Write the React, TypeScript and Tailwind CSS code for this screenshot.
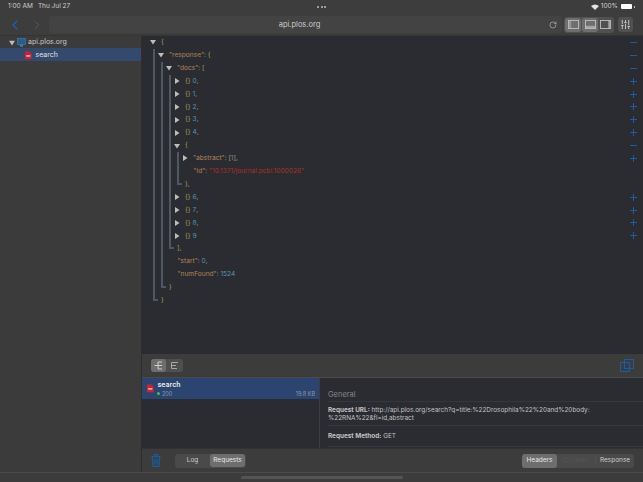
import type { ReactNode } from 'react';
import { ChevronLeft, ChevronRight, RotateCw, SlidersVertical } from 'lucide-react';

function Tri({ open }: { open?: boolean }) {
  return (
    <svg viewBox="0 0 6 6" className="w-[6px] h-[6px] -ml-[3px] mr-[5px] shrink-0">
      {open ? <polygon points="0,1 6,1 3,5.5" fill="#bdbdbd" /> : <polygon points="1,0 5.5,3 1,6" fill="#bdbdbd" />}
    </svg>
  );
}

function Mark({ kind }: { kind?: '+' | '-' }) {
  if (!kind) return null;
  return (
    <svg viewBox="0 0 7 7" shapeRendering="crispEdges" className="w-[7px] h-[7px] ml-auto mr-[6px] shrink-0">
      <rect x="0" y="3" width="7" height="1" fill="#24599c" />
      {kind === '+' && <rect x="3" y="0" width="1" height="7" fill="#24599c" />}
    </svg>
  );
}

function Row({ children, mark, className = '' }: { children: ReactNode; mark?: '+' | '-'; className?: string }) {
  return (
    <div className={`h-[12.9px] flex items-center text-[6.6px] leading-none whitespace-pre ${className}`}>
      {children}
      <Mark kind={mark} />
    </div>
  );
}

const Key = ({ children }: { children: ReactNode }) => <span className="text-[#b08459]">{children}</span>;
const Punct = ({ children }: { children: ReactNode }) => <span className="text-[#a09c58]">{children}</span>;
const Num = ({ children }: { children: ReactNode }) => <span className="text-[#5595b8]">{children}</span>;
const Plain = ({ children }: { children: ReactNode }) => <span className="text-[#9c9c9c]">{children}</span>;

function Block({ open, close, children }: { open: ReactNode; close: ReactNode; children: ReactNode }) {
  return (
    <div>
      <Row mark="-">
        <Tri open />
        {open}
      </Row>
      <div className="flex">
        <div className="w-[5px] mr-[3px] mb-[6px] border-l-2 border-b-2 border-[#4f5664] shrink-0" />
        <div className="flex-1 min-w-0">
          {children}
          <Row>{close}</Row>
        </div>
      </div>
    </div>
  );
}

function Doc({ n, last }: { n: number; last?: boolean }) {
  return (
    <Row mark="+">
      <Tri />
      <Punct>{'{} '}</Punct>
      <Num>{n}</Num>
      {!last && <Plain>,</Plain>}
    </Row>
  );
}

function JsonTree() {
  return (
    <div className="pl-[11px] h-[318px] bg-[#2b2c31] shrink-0">
      <Block open={<Punct>{'{'}</Punct>} close={<Punct>{'}'}</Punct>}>
        <Block
          open={<><Key>"response"</Key><Plain>: </Plain><Punct>{'{'}</Punct></>}
          close={<Punct>{'}'}</Punct>}
        >
          <Block
            open={<><Key>"docs"</Key><Plain>: </Plain><Punct>[</Punct></>}
            close={<><Punct>]</Punct><Plain>,</Plain></>}
          >
            <Doc n={0} />
            <Doc n={1} />
            <Doc n={2} />
            <Doc n={3} />
            <Doc n={4} />
            <Block open={<Punct>{'{'}</Punct>} close={<><Punct>{'}'}</Punct><Plain>,</Plain></>}>
              <Row mark="+">
                <Tri />
                <Key>"abstract"</Key>
                <Plain>: </Plain>
                <Punct>[</Punct>
                <Num>1</Num>
                <Punct>]</Punct>
                <Plain>,</Plain>
              </Row>
              <Row className="pl-[8.5px]">
                <Key>"id"</Key>
                <Plain>: </Plain>
                <span className="text-[#aa302c]">"10.1371/journal.pcbi.1000026"</span>
              </Row>
            </Block>
            <Doc n={6} />
            <Doc n={7} />
            <Doc n={8} />
            <Doc n={9} last />
          </Block>
          <Row className="pl-[8.5px]">
            <Key>"start"</Key>
            <Plain>: </Plain>
            <Num>0</Num>
            <Plain>,</Plain>
          </Row>
          <Row className="pl-[8.5px]">
            <Key>"numFound"</Key>
            <Plain>: </Plain>
            <Num>1524</Num>
          </Row>
        </Block>
      </Block>
    </div>
  );
}

function FileIcon() {
  return (
    <svg width="6.5" height="8.5" viewBox="0 0 8 10" className="shrink-0">
      <path d="M0 0.5 H5.2 L8 3 V10 H0 Z" fill="#d3202c" />
      <rect x="1.4" y="5" width="5.2" height="1.6" fill="#f3d0d0" />
    </svg>
  );
}

function PanelIcon({ side }: { side: 'left' | 'bottom' | 'right' }) {
  return (
    <svg width="11" height="9" viewBox="0 0 12 10">
      <rect x="0.5" y="0.5" width="11" height="9" fill="none" stroke="#bdbdbd" strokeWidth="1" />
      {side === 'left' && <rect x="0.5" y="0.5" width="3" height="9" fill="#bdbdbd" opacity="0.5" />}
      {side === 'bottom' && <rect x="0.5" y="6.5" width="11" height="3" fill="#bdbdbd" opacity="0.7" />}
      {side === 'right' && <rect x="9" y="0.5" width="2.5" height="9" fill="#bdbdbd" opacity="0.7" />}
    </svg>
  );
}

function TopBar() {
  return (
    <div className="h-[36px] bg-[#3d3d3d] border-b border-[#343434] shrink-0 relative">
      <div className="h-[13px] flex items-center px-[8px] text-[6.5px] text-[#cfcfcf]">
        <span>1:00 AM</span>
        <span className="ml-[5px]">Thu Jul 27</span>
        <div className="absolute left-[317px] flex gap-[1.5px]">
          <span className="w-[2px] h-[2px] rounded-full bg-[#bdbdbd]" />
          <span className="w-[2px] h-[2px] rounded-full bg-[#bdbdbd]" />
          <span className="w-[2px] h-[2px] rounded-full bg-[#bdbdbd]" />
        </div>
        <div className="ml-auto flex items-center gap-[2px]">
          <svg width="8" height="6" viewBox="0 0 8 6">
            <path d="M0 2 Q4 -1.2 8 2 L4 6 Z" fill="#e4e4e4" />
          </svg>
          <span>100%</span>
          <span className="w-[11px] h-[5px] bg-white rounded-[1px] ml-[1px]" />
          <span className="w-[1px] h-[2px] bg-[#bbb]" />
        </div>
      </div>
      <div className="h-[23px] flex items-center pl-[7px] pr-[8px]">
        <ChevronLeft className="w-[16px] h-[16px] text-[#1c64b2] shrink-0" strokeWidth={1.6} />
        <ChevronRight className="w-[14px] h-[14px] text-[#5a5a5a] ml-[7px] shrink-0" strokeWidth={1.6} />
        <div className="ml-[5px] w-[513px] h-[17px] pr-[12px] rounded-[3px] bg-[#434343] relative flex items-center justify-center shrink-0">
          <span className="text-[7.5px] text-[#cccccc]">api.plos.org</span>
          <RotateCw className="absolute right-[5px] w-[8px] h-[8px] text-[#b5b5b5]" strokeWidth={2} />
        </div>
        <div className="ml-[2px] w-[50px] h-[16px] rounded-[3px] bg-[#505050] flex items-center px-[1px] shrink-0">
          <div className="w-[16px] h-[14px] rounded-[3px] bg-[#6e6e6e] flex items-center justify-center">
            <PanelIcon side="left" />
          </div>
          <div className="ml-[1px] w-[16px] h-[14px] rounded-[3px] bg-[#6e6e6e] flex items-center justify-center">
            <PanelIcon side="bottom" />
          </div>
          <div className="w-[15px] h-[14px] flex items-center justify-center">
            <PanelIcon side="right" />
          </div>
        </div>
        <div className="ml-[4px] w-[15px] h-[15px] rounded-[3px] bg-[#505050] flex items-center justify-center shrink-0">
          <SlidersVertical className="w-[11px] h-[11px] text-[#c8c8c8]" strokeWidth={2} />
        </div>
      </div>
    </div>
  );
}

function Sidebar() {
  return (
    <div className="w-[142px] bg-[#3b3b3b] border-r border-[#2e2e2e] shrink-0 text-[7px] text-[#c8c8c8]">
      <div className="h-[12px] flex items-center pl-[9px] pt-[1px]">
        <svg viewBox="0 0 7 7" className="w-[6px] h-[6px] shrink-0">
          <polygon points="0,1 7,1 3.5,6.5" fill="#bdbdbd" />
        </svg>
        <svg width="9" height="9" viewBox="0 0 9 9" className="ml-[2px] shrink-0">
          <rect x="0.5" y="0.5" width="8" height="6" fill="#2c5c86" stroke="#3f86bd" strokeWidth="0.6" />
          <rect x="3" y="7" width="3" height="1.6" fill="#3f86bd" />
        </svg>
        <span className="ml-[2px]">api.plos.org</span>
      </div>
      <div className="h-[13px] bg-[#34496e] flex items-center pl-[25px] pt-[1px]">
        <FileIcon />
        <span className="ml-[4px] text-[#e0e0e0]">search</span>
      </div>
    </div>
  );
}

function LowerToolbar() {
  return (
    <div className="h-[24px] bg-[#3c3c3c] border-b border-[#4a4a4a] flex items-center pl-[9px] pr-[9px] shrink-0">
      <div className="h-[13px] w-[32px] rounded-[3px] bg-[#4f4f4f] flex shrink-0">
        <div className="w-[15px] h-[13px] rounded-[3px] bg-[#6e6e6e] flex items-center justify-center">
          <svg width="9" height="9" viewBox="0 0 9 9" fill="none" stroke="#cfcfcf" strokeWidth="1">
            <path d="M0.5 4.5 H4 M4 1 V8 M4 1 H8 M4 4.5 H8 M4 8 H8" />
          </svg>
        </div>
        <div className="flex-1 flex items-center justify-center">
          <svg width="8" height="7" viewBox="0 0 8 7" fill="none" stroke="#a8a8a8" strokeWidth="1">
            <path d="M0.5 0.5 H7 M0.5 0.5 V6.5 M0.5 3.5 H5 M0.5 6.5 H6" />
          </svg>
        </div>
      </div>
      <svg width="14" height="13" viewBox="0 0 14 13" fill="none" stroke="#1b5aa4" strokeWidth="1" className="ml-auto shrink-0">
        <rect x="4.5" y="0.5" width="9" height="9" />
        <rect x="0.5" y="3.5" width="9" height="9" />
      </svg>
    </div>
  );
}

function RequestPanels() {
  return (
    <div className="h-[70px] flex bg-[#2b2c31] shrink-0">
      <div className="w-[177px] shrink-0">
        <div className="h-[21px] bg-[#2c4570] flex items-center pl-[5px] pr-[4px]">
          <FileIcon />
          <div className="ml-[4px] flex-1 min-w-0">
            <div className="text-[7px] font-semibold text-[#e8e8e8] leading-[9px]">search</div>
            <div className="flex items-center text-[5.5px] text-[#8f98a8] leading-[8px] mt-[1px] -ml-[1px]">
              <span className="w-[3.5px] h-[3.5px] rounded-full bg-[#42c04a] mr-[2px]" />
              <span>200</span>
              <span className="ml-auto">19.8 KB</span>
            </div>
          </div>
        </div>
      </div>
      <div className="flex-1 min-w-0 border-l border-[#3c3d42] pl-[8px] text-[6.4px] leading-[7.5px] text-[#c2c2c2]">
        <div className="h-[24px] pt-[13px] text-[7.5px] text-[#858585] border-b border-[#36373c]">General</div>
        <div className="h-[24px] pt-[5px] border-b border-[#36373c] whitespace-nowrap">
          <span className="font-bold">Request URL:</span> http://api.plos.org/search?q=title:%22Drosophila%22%20and%20body:
          <br />
          %22RNA%22&amp;fl=id,abstract
        </div>
        <div className="h-[21px] pt-[7px] border-b border-[#36373c]">
          <span className="font-bold">Request Method:</span> GET
        </div>
      </div>
    </div>
  );
}

function BottomBar() {
  return (
    <div className="h-[24px] bg-[#3c3c3c] border-t border-[#333333] flex items-center pl-[9px] pr-[9px] text-[6.5px] text-[#cccccc] shrink-0">
      <svg width="10" height="13" viewBox="0 0 10 13" fill="none" stroke="#1b5aa4" strokeWidth="1.2" className="shrink-0">
        <path d="M0.5 2.5 H9.5 M3.5 2 V0.7 H6.5 V2 M1.3 2.5 L2 12.3 H8 L8.7 2.5 M3.8 4.5 V10.5 M6.2 4.5 V10.5" />
      </svg>
      <div className="ml-[14px] h-[14px] w-[71px] rounded-[3px] bg-[#4a4a4a] flex items-center shrink-0">
        <div className="w-[35px] text-center">Log</div>
        <div className="w-[35px] h-[13px] rounded-[3px] bg-[#6e6e6e] flex items-center justify-center text-[#e6e6e6]">Requests</div>
      </div>
      <div className="ml-auto h-[14px] w-[112px] rounded-[3px] bg-[#4a4a4a] flex items-center shrink-0">
        <div className="w-[35px] h-[14px] rounded-[3px] bg-[#6e6e6e] flex items-center justify-center text-[#e6e6e6]">Headers</div>
        <div className="w-[39px] text-center text-[#565656] border-r border-[#505050]">Cookies</div>
        <div className="flex-1 text-center">Response</div>
      </div>
    </div>
  );
}

export default function App() {
  return (
    <div className='w-[643px] h-[482px] overflow-hidden flex flex-col bg-[#3b3b3b] font-["Inter","Liberation_Sans",sans-serif]'>
      <TopBar />
      <div className="flex-1 min-h-0 flex">
        <Sidebar />
        <div className="flex-1 min-w-0 flex flex-col">
          <JsonTree />
          <LowerToolbar />
          <RequestPanels />
          <BottomBar />
        </div>
      </div>
      <div className="h-[10px] bg-[#3c3c3c] border-t border-[#4a4a4a] flex items-center justify-center shrink-0">
        <div className="w-[162px] h-[3px] rounded-full bg-[#555555]" />
      </div>
    </div>
  );
}
